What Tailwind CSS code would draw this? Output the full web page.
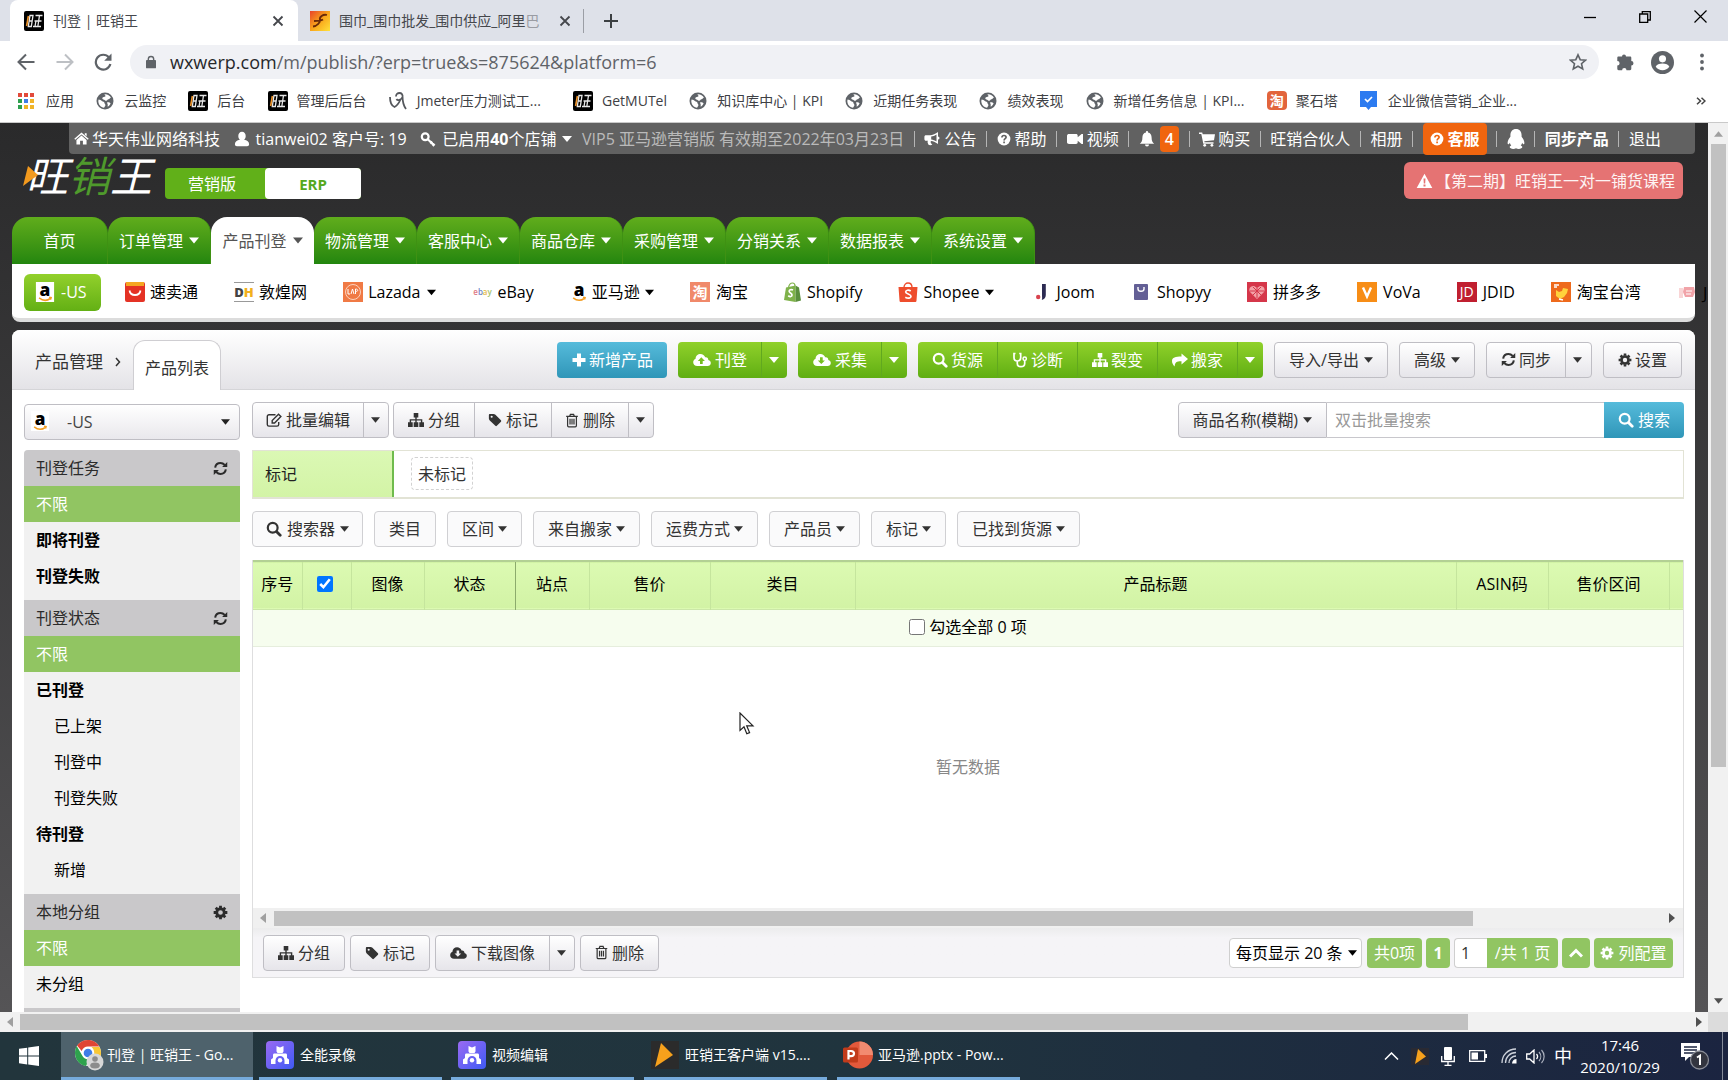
<!DOCTYPE html>
<html lang="zh-CN">
<head>
<meta charset="utf-8">
<title>刊登 | 旺销王</title>
<script src="https://cdn.jsdelivr.net/npm/@tailwindcss/browser@4"></script>
</head>
<body class="flex h-screen flex-col overflow-hidden bg-white font-['Open_Sans','Noto_Sans_CJK_SC',sans-serif] text-[16px] leading-6 text-[#222]">

<svg class="absolute h-0 w-0" aria-hidden="true">
  <defs>
    <linearGradient id="flame" x1="0" y1="0" x2="1" y2="1"><stop offset="0" stop-color="#e8432a"/><stop offset=".5" stop-color="#f9a51b"/><stop offset="1" stop-color="#ffe23a"/></linearGradient>
    <linearGradient id="violet" x1="0" y1="0" x2="1" y2="1"><stop offset="0" stop-color="#9a6af2"/><stop offset="1" stop-color="#3f5af5"/></linearGradient>
  </defs>
  <symbol id="caret" viewBox="0 0 10 6"><path fill="currentColor" d="M0 0h10L5 6z"/></symbol>
  <symbol id="close" viewBox="0 0 12 12"><path fill="none" stroke="currentColor" stroke-width="1.8" d="M1.5 1.5l9 9m0-9l-9 9"/></symbol>
  <symbol id="plus" viewBox="0 0 16 16"><path fill="currentColor" d="M6 1.500h4V6h4.500v4H10v4.500H6V10H1.500V6H6z"/></symbol>
  <symbol id="globe" viewBox="0 0 18 18"><circle cx="9" cy="9" r="8.500" fill="#5f6368"/><path fill="#fff" d="M2.600 7.500c1.500.2 2.500.6 3.300 1.500.9.900 2.600.5 2.600 2 0 1.200 1.300 1.300.8 2.700-.3.900-1 1.300-1.200 2C4.800 15.300 2.300 12.700 2.300 9zM8.500 2.200c3-.2 5.200 1.200 6.400 3.400-1 .6-1.300 1.600-2.400 1.700-1.300.1-1 1.300-2.200 1.400C9 8.800 8.800 7.600 7.300 7.400 6 7.200 6 6 7 5.300c.9-.6 2.500-.2 2.500-1.300 0-.8-1-.9-1-1.800z"/><path fill="#fff" d="M11 10.500c1.300-.6 3 .2 3.600.8-.4 1.300-1.500 2.700-2.800 3.500-.4-1.300.3-1.800-.2-2.600z"/></symbol>
  <symbol id="wang" viewBox="0 0 20 20"><rect width="20" height="20" rx="2" fill="#000"/><g fill="none" stroke="#e8e8e8" stroke-width="1.300"><path d="M6 4.500h3L7.300 15.500h-3zM5.200 10h3.300M11.500 4.500h7M10.500 10h7M9 15.500h8M15.500 4.500l-1.700 11M12 9.500l-1 6"/></g><path stroke="#f0952a" stroke-width="1.600" d="M4.400 5L2.600 15"/></symbol>
  <symbol id="home" viewBox="0 0 16 16"><path fill="currentColor" d="M8 1.600L15.700 8.300l-1 1.100L8 3.700 1.300 9.400l-1-1.100zM8 4.900l5.400 4.600V14.500H9.500V10.500h-3v4H2.600V9.500zM11.500 2.300h2v3.300l-2-1.700z"/></symbol>
  <symbol id="user" viewBox="0 0 16 16"><path fill="currentColor" d="M8 .8c2.200 0 3.700 1.700 3.700 4.200 0 1.700-.7 3-1.600 3.700 3 .4 5 1.900 5 4.600 0 1.200-.8 1.900-2 1.900H2.900c-1.200 0-2-.7-2-1.900 0-2.700 2-4.200 5-4.600C5 8 4.300 6.700 4.300 5 4.300 2.500 5.800.8 8 .8z"/></symbol>
  <symbol id="key" viewBox="0 0 16 16"><circle cx="5.200" cy="5.800" r="3.400" fill="none" stroke="currentColor" stroke-width="2.200"/><path fill="none" stroke="currentColor" stroke-width="2.200" d="M7.500 8l6.300 6M10.300 12.600l2-2M12.600 14.900l2-2"/></symbol>
  <symbol id="horn" viewBox="0 0 16 16"><path fill="currentColor" fill-rule="evenodd" d="M14 1v4.500a1.500 1.500 0 0 1 0 3V13c-2-1.700-4.500-2.900-7-3.100-.7.900 0 1.500-.2 2.200.5.600.9 1 1.500 1.400-1 1.200-3.300.9-4 .1C4.100 12 3 11.500 3.900 9.800H2C1 9.800.4 9.200.4 8.300V5.700C.4 4.800 1 4.200 2 4.200h4C8.500 4.200 11.700 2.800 14 1zm-1.500 2.600C10.800 4.800 9 5.400 7.200 5.600v2.900c1.900.2 3.700.900 5.300 2z"/></symbol>
  <symbol id="help" viewBox="0 0 16 16"><circle cx="8" cy="8" r="7.300" fill="currentColor"/><path fill="none" stroke="var(--hole,#616161)" stroke-width="1.900" d="M5.600 6.300c.1-1.700 1-2.300 2.400-2.300 1.500 0 2.400.8 2.400 2 0 1.700-2.300 1.600-2.300 3.700M8.100 10.900v2"/></symbol>
  <symbol id="video" viewBox="0 0 16 16"><path fill="currentColor" d="M2 3h7c1 0 1.700.7 1.700 1.700v1.600L14.600 3H16v10h-1.400l-3.900-3.300v1.600c0 1-.7 1.700-1.700 1.700H2c-1 0-2-.7-2-1.700V4.700C0 3.700 1 3 2 3z"/></symbol>
  <symbol id="bell" viewBox="0 0 16 16"><path fill="currentColor" d="M8 0c.6 0 1 .4 1 1v.6c2.500.4 3.600 2.400 3.600 4.900 0 3.500 1 4.800 2.600 6.200H.8C2.400 11.300 3.400 10 3.400 6.500 3.400 4 4.500 2 7 1.600V1c0-.6.400-1 1-1zM6 13.500h4a2 2 0 0 1-4 0z"/></symbol>
  <symbol id="cart" viewBox="0 0 16 16"><path fill="currentColor" d="M0 1.500h3.200l.5 1.700H16l-1 6L5.300 10.300l.2 1H14.500v1.400H4.300L2.300 3H0z"/><circle cx="5.700" cy="14.300" r="1.400" fill="currentColor"/><circle cx="12.900" cy="14.300" r="1.400" fill="currentColor"/></symbol>
  <symbol id="qq" viewBox="0 0 18 20"><path fill="currentColor" d="M9 0c3.600 0 5.600 2.600 5.600 6.200v1.600c1.600 2 2.800 4.200 2.800 6.100 0 1-.5 1.600-1 1.400-.4-.1-.9-.8-1.200-1.500-.2 1-.8 2-1.500 2.700.9.300 1.600.9 1.600 1.600 0 1.100-1.600 1.900-3.500 1.900-1.200 0-2.200-.3-2.800-.8-.6.500-1.600.8-2.800.8-1.900 0-3.500-.8-3.500-1.900 0-.7.700-1.300 1.600-1.600-.7-.7-1.300-1.700-1.500-2.700-.3.700-.8 1.400-1.200 1.500-.5.200-1-.4-1-1.400 0-1.900 1.200-4.100 2.800-6.100V6.200C3.400 2.600 5.400 0 9 0z"/></symbol>
  <symbol id="warn" viewBox="0 0 16 16"><path fill="currentColor" fill-rule="evenodd" d="M8 .8l7.800 14.200H.2zM7 5.500l.3 5h1.400l.3-5zM7 11.500v2h2v-2z"/></symbol>
  <symbol id="search" viewBox="0 0 16 16"><circle cx="6.700" cy="6.700" r="4.900" fill="none" stroke="currentColor" stroke-width="2.200"/><path stroke="currentColor" stroke-width="2.800" stroke-linecap="round" d="M10.700 10.700l3.500 3.500"/></symbol>
  <symbol id="cloudup" viewBox="0 0 18 16"><path fill="currentColor" fill-rule="evenodd" d="M7.500 2c2.200 0 4 1.400 4.700 3.300 1.800-.4 3.300.8 3.100 2.700 1.500.4 2.500 1.500 2.500 3 0 1.800-1.400 3-3.200 3H4.200C1.900 14 .2 12.500.2 10.300c0-1.600 1-2.900 2.400-3.500C2.600 4 4.800 2 7.500 2zM8.300 5.300L4.800 8.900H7V12h2.700V8.900h2.200z"/></symbol>
  <symbol id="clouddown" viewBox="0 0 18 16"><path fill="currentColor" fill-rule="evenodd" d="M7.500 2c2.200 0 4 1.400 4.700 3.300 1.800-.4 3.300.8 3.100 2.700 1.500.4 2.500 1.500 2.500 3 0 1.800-1.400 3-3.200 3H4.200C1.900 14 .2 12.500.2 10.300c0-1.600 1-2.900 2.400-3.500C2.600 4 4.800 2 7.500 2zM7 5.300v3.100H4.800l3.500 3.700 3.600-3.700H9.700V5.300z"/></symbol>
  <symbol id="steth" viewBox="0 0 16 16"><path fill="none" stroke="currentColor" stroke-width="1.700" d="M3.500 1.500H2v4c0 2 1.400 3.500 3.300 3.500s3.400-1.500 3.400-3.500v-4H7.200M5.300 9v2.500c0 2 1.500 3.200 3.600 3.200s3.800-1.200 3.800-3.200V8.500"/><circle cx="12.700" cy="6.800" r="1.700" fill="none" stroke="currentColor" stroke-width="1.500"/></symbol>
  <symbol id="tree" viewBox="0 0 16 16"><path fill="currentColor" d="M5.700 1h4.600v4.500H8.700v1.700h5.600v3H16V15h-4.700v-4.800h1.600V8.600H8.700v1.600h1.600V15H5.700v-4.800h1.600V8.600H3.100v1.600h1.600V15H0v-4.800h1.700v-3h5.600V5.500H5.700z"/></symbol>
  <symbol id="share" viewBox="0 0 16 16"><path fill="currentColor" d="M9.500 1.500L16 7l-6.500 5.500V9.300C5 9.200 2.800 10 2.700 14.600.9 12.500 0 10.800 0 8.900 0 5.500 3.500 4.600 9.500 4.600z"/></symbol>
  <symbol id="refresh" viewBox="0 0 16 16"><path fill="none" stroke="currentColor" stroke-width="2.200" d="M2.300 7C2.800 4 5 2.200 8 2.200c1.800 0 3.300.8 4.500 2M13.700 9c-.5 3-2.700 4.800-5.700 4.800-1.800 0-3.300-.8-4.500-2"/><path fill="currentColor" d="M15.200 1v5.500H9.700zM.8 15V9.500h5.500z"/></symbol>
  <symbol id="gear" viewBox="0 0 16 16"><circle cx="8" cy="8" r="4" fill="none" stroke="currentColor" stroke-width="3"/><path stroke="currentColor" stroke-width="3" d="M8 .7v2.500M8 12.800v2.500M.7 8h2.500M12.800 8h2.500M2.900 2.900l1.700 1.700M11.400 11.400l1.700 1.700M2.900 13.100l1.700-1.700M11.400 4.600l1.700-1.700"/></symbol>
  <symbol id="edit" viewBox="0 0 16 16"><path fill="none" stroke="currentColor" stroke-width="1.400" d="M9.500 2.700H3c-1 0-1.700.7-1.700 1.700v8c0 1 .7 1.700 1.700 1.700h8c1 0 1.700-.7 1.700-1.700V10"/><path fill="none" stroke="currentColor" stroke-width="1.400" d="M6.200 11V8.500l6.300-6.300 2.400 2.400L8.600 11z"/></symbol>
  <symbol id="tag" viewBox="0 0 16 16"><path fill="currentColor" fill-rule="evenodd" d="M1 2.200C1 1.500 1.500 1 2.200 1h4c.8 0 1.800.4 2.300 1l6.300 6.200c.5.500.5 1.200 0 1.700l-4.700 4.800c-.5.500-1.200.5-1.700 0L2 8.500C1.400 8 1 7 1 6.200zm3.200.8a1.200 1.200 0 1 0 0 2.400 1.200 1.200 0 0 0 0-2.400z"/></symbol>
  <symbol id="trash" viewBox="0 0 14 16"><path fill="none" stroke="currentColor" stroke-width="1.300" d="M.8 3.700h12.400M4.500 3.500l.8-2h3.400l.8 2M2.300 4v9.300c0 .8.500 1.400 1.200 1.400h7c.7 0 1.200-.6 1.200-1.400V4M4.900 6.200v6M7 6.200v6M9.100 6.200v6"/></symbol>
  <symbol id="amazon" viewBox="0 0 20 22"><rect width="20" height="22" fill="#fff"/><text x="10" y="15" text-anchor="middle" font-family="Open Sans" font-weight="800" font-size="19" fill="#000">a</text><path fill="none" stroke="#f39c1f" stroke-width="1.700" d="M3.500 17.500c4 3.200 9 3.200 12.500.5M14.500 16.800l2.200.4-.6 2.200"/></symbol>
  <symbol id="recorder" viewBox="0 0 28 28"><rect width="28" height="28" rx="4" fill="url(#violet)"/><path fill="#fff" d="M10.500 5l3.500 1.500L17.500 5v5.500l-1 1.500h-5l-1-1.500zM8.500 12.500h11c1 0 1.500.7 1.500 1.500v3l2 1.500V23h-4.500v-3.500a4.500 4.500 0 0 0-9 0V23H5v-4.500L7 17v-3c0-.8.500-1.500 1.500-1.500z"/><circle cx="14" cy="19.300" r="2.200" fill="#fff"/></symbol>
</svg>

<!-- tab strip -->
<header class="shrink-0">
  <div class="flex h-[41px] items-center bg-[#dee1e9] text-[14px] text-[#45474c]">
    <div class="ml-[10px] flex h-full w-[288px] shrink-0 items-center rounded-t-lg bg-white pr-[10px] pl-[14px]">
      <svg class="h-5 w-5"><use href="#wang"/></svg>
      <span class="ml-[9px] flex-1">刊登 | 旺销王</span>
      <button aria-label="关闭标签页" class="p-1"><svg class="h-3 w-3"><use href="#close"/></svg></button>
    </div>
    <div class="flex w-[286px] shrink-0 items-center border-r border-[#9b9ea5] pr-2 pl-3">
      <svg class="h-5 w-5" viewBox="0 0 20 20"><rect width="20" height="20" fill="url(#flame)"/><path fill="none" stroke="#6b2a08" stroke-width="1.800" d="M17 4c-4-1-8 2-7 5 .7 2-3 6-7 6.500M4 10c3 0 7-.3 9-1.500"/></svg>
      <span class="ml-[9px] flex-1 whitespace-nowrap">围巾_围巾批发_围巾供应_阿里<span class="text-[#9a9ca3]">巴</span></span>
      <button aria-label="关闭标签页" class="p-1"><svg class="h-3 w-3"><use href="#close"/></svg></button>
    </div>
    <button aria-label="新标签页" class="ml-5"><svg class="h-[14px] w-[14px]" viewBox="0 0 14 14"><path stroke="#3c4043" stroke-width="2" d="M7 0v14M0 7h14"/></svg></button>
    <div class="ml-auto flex items-center gap-[43px] pr-[21px] pb-2 text-black">
      <button aria-label="最小化"><svg class="h-3 w-3" viewBox="0 0 12 12"><path stroke="currentColor" stroke-width="1.300" d="M0 6.500h12"/></svg></button>
      <button aria-label="还原"><svg class="h-3 w-3" viewBox="0 0 12 12"><path fill="none" stroke="currentColor" stroke-width="1.300" d="M.7 3h8v8.300h-8zM3.300 3V.7h8v8.300H9"/></svg></button>
      <button aria-label="关闭"><svg class="h-[13px] w-[13px]" viewBox="0 0 13 13"><path stroke="currentColor" stroke-width="1.200" d="M.5.5l12 12m0-12l-12 12"/></svg></button>
    </div>
  </div>
  <!-- address bar -->
  <div class="flex h-[42px] items-center pr-6 pl-[17px] text-[#5f6368]">
    <button aria-label="后退"><svg class="h-[18px] w-[18px]" viewBox="0 0 18 18"><path fill="none" stroke="currentColor" stroke-width="2" d="M17.500 9H2M9 1.500L1.500 9 9 16.500"/></svg></button>
    <button aria-label="前进" class="ml-[21px] text-[#bdc0c4]"><svg class="h-[18px] w-[18px]" viewBox="0 0 18 18"><path fill="none" stroke="currentColor" stroke-width="2" d="M.5 9H16M9 1.500L16.500 9 9 16.500"/></svg></button>
    <button aria-label="刷新" class="ml-5"><svg class="h-[18px] w-[18px]" viewBox="0 0 18 18"><path fill="none" stroke="currentColor" stroke-width="2.200" d="M15 4.500A7.400 7.400 0 1 0 16.400 11"/><path fill="currentColor" d="M17.500.5v7.300h-7.300z"/></svg></button>
    <div class="ml-[18px] flex h-[34px] flex-1 items-center rounded-full bg-[#f0f1f5] pr-3 pl-4">
      <svg class="h-[14px] w-[10px]" viewBox="0 0 12 15"><rect y="5" width="12" height="10" rx="1" fill="currentColor"/><path fill="none" stroke="currentColor" stroke-width="1.700" d="M2.800 6V4a3.200 3.200 0 0 1 6.400 0v2"/></svg>
      <span class="ml-[14px] flex-1 text-[18px]"><span class="text-[#26282b]">wxwerp.com</span>/m/publish/?erp=true&amp;s=875624&amp;platform=6</span>
      <svg class="h-[18px] w-[18px]" viewBox="0 0 18 18"><path fill="none" stroke="currentColor" stroke-width="1.600" d="M9 1.800l2.200 4.900 5.300.5-4 3.500 1.200 5.200L9 13.200l-4.700 2.700 1.200-5.200-4-3.500 5.300-.5z"/></svg>
    </div>
    <svg class="ml-[17px] h-[18px] w-[18px]" viewBox="0 0 18 18"><path fill="currentColor" d="M6 3.500a2 2 0 0 1 4 0h4c.8 0 1.300.5 1.300 1.300V8a2.200 2.200 0 0 1 0 4.400v3.400c0 .8-.5 1.400-1.300 1.400h-3.500a2.200 2.200 0 0 0-4.400 0H2.600c-.8 0-1.300-.6-1.300-1.400v-3.200a2.300 2.300 0 0 0 0-4.600V4.800c0-.8.5-1.300 1.300-1.300z"/></svg>
    <svg class="ml-[17px] h-[23px] w-[23px]" viewBox="0 0 22 22"><circle cx="11" cy="11" r="11" fill="currentColor"/><circle cx="11" cy="7.500" r="3.400" fill="#fff"/><path fill="#fff" d="M4.500 15c.8-2.200 3.500-3 6.500-3s5.700.8 6.500 3c-1.400 2-3.900 3.300-6.500 3.300S5.900 17 4.500 15z"/></svg>
    <svg class="ml-[26px] h-[18px] w-1" viewBox="0 0 4 18"><circle cx="2" cy="2.500" r="1.900" fill="currentColor"/><circle cx="2" cy="9" r="1.900" fill="currentColor"/><circle cx="2" cy="15.500" r="1.900" fill="currentColor"/></svg>
  </div>
  <!-- bookmarks -->
  <nav class="flex h-[40px] items-center border-b border-[#c9c9c9] pb-1 pl-[18px] pr-[22px] text-[14px] text-[#3e4044]">
    <ul class="mr-[179px] flex flex-1 items-center justify-between whitespace-nowrap">
      <li><a href="#" class="flex items-center gap-3"><svg class="h-4 w-4" viewBox="0 0 16 16"><g fill="#e24a3b"><path d="M0 0h4v4H0zM6 0h4v4H6zM12 0h4v4h-4z"/></g><path fill="#2fa04e" d="M0 6h4v4H0zM0 12h4v4H0z"/><path fill="#3f7de8" d="M6 6h4v4H6z"/><path fill="#f0b429" d="M12 6h4v4h-4zM6 12h4v4H6zM12 12h4v4h-4z"/></svg>应用</a></li>
      <li><a href="#" class="flex items-center gap-[10px]"><svg class="h-[18px] w-[18px]"><use href="#globe"/></svg>云监控</a></li>
      <li><a href="#" class="flex items-center gap-[9px]"><svg class="h-5 w-5"><use href="#wang"/></svg>后台</a></li>
      <li><a href="#" class="flex items-center gap-[9px]"><svg class="h-5 w-5"><use href="#wang"/></svg>管理后后台</a></li>
      <li class="pr-[10px]"><a href="#" class="flex items-center gap-[10px]"><svg class="h-[18px] w-[18px]" viewBox="0 0 18 18"><path fill="none" stroke="#55585d" stroke-width="1.800" d="M1 5c0 6 2 9 4.500 10 2-1 4-3 6-7.500M7 4.500C7 2 8.500 1 10.500 1S14 2.500 13.500 5c-1 3-5 4-6 2M13.500 4c0 5 .5 9 3.500 13"/></svg>Jmeter压力测试工...</a></li>
      <li><a href="#" class="flex items-center gap-[9px]"><svg class="h-5 w-5"><use href="#wang"/></svg>GetMUTel</a></li>
      <li><a href="#" class="flex items-center gap-[10px]"><svg class="h-[18px] w-[18px]"><use href="#globe"/></svg>知识库中心 | KPI</a></li>
      <li><a href="#" class="flex items-center gap-[10px]"><svg class="h-[18px] w-[18px]"><use href="#globe"/></svg>近期任务表现</a></li>
      <li><a href="#" class="flex items-center gap-[10px]"><svg class="h-[18px] w-[18px]"><use href="#globe"/></svg>绩效表现</a></li>
      <li><a href="#" class="flex items-center gap-[10px]"><svg class="h-[18px] w-[18px]"><use href="#globe"/></svg>新增任务信息 | KPI...</a></li>
      <li><a href="#" class="flex items-center gap-[9px]"><span class="flex h-[19px] w-5 items-center justify-center rounded-sm bg-[#e2643c] text-[14px] font-bold text-white">淘</span>聚石塔</a></li>
      <li><a href="#" class="flex items-center gap-[11px]"><svg class="h-[19px] w-[17px]" viewBox="0 0 17 19"><path fill="#2c7bf0" d="M0 0h17v16h-6l-2.500 3L6 16H0z"/><path fill="none" stroke="#fff" stroke-width="1.700" d="M5 8l2.500 2.500L12 6"/></svg>企业微信营销_企业...</a></li>
    </ul>
    <button aria-label="更多书签"><svg class="h-2 w-[10px]" viewBox="0 0 10 8"><path fill="none" stroke="#444" stroke-width="1.500" d="M1 .7L4.500 4 1 7.300M5.500.7L9 4 5.500 7.300"/></svg></button>
  </nav>
</header>

<!-- page viewport -->
<div class="flex min-h-0 flex-1">
  <main class="flex min-w-0 flex-1 flex-col overflow-hidden bg-linear-to-b from-[#2a2a2b] to-[#555456] pl-3">
    <!-- account bar -->
    <div class="mr-[13px] ml-[57px] flex h-[31px] shrink-0 items-center justify-between rounded-b bg-[#616161] pr-[34px] pl-[5px] whitespace-nowrap text-white">
      <a href="#" class="mr-1 flex items-center gap-[3px]"><svg class="h-[15px] w-[15px]"><use href="#home"/></svg>华天伟业网络科技</a>
      <a href="#" class="mr-1 flex items-center gap-[6px]"><svg class="h-4 w-4"><use href="#user"/></svg>tianwei02 客户号: 19</a>
      <a href="#" class="flex items-center gap-[6px]"><svg class="h-4 w-4"><use href="#key"/></svg><span>已启用<b>40</b>个店铺</span><svg class="h-[6px] w-[10px]"><use href="#caret"/></svg></a>
      <span class="text-[#bababa]">VIP5 亚马逊营销版 有效期至2022年03月23日</span>
      <i class="h-4 w-px bg-[#b5b5b5]"></i>
      <a href="#" class="flex items-center gap-1"><svg class="h-4 w-4"><use href="#horn"/></svg>公告</a>
      <i class="h-4 w-px bg-[#b5b5b5]"></i>
      <a href="#" class="flex items-center gap-1"><svg class="h-[14px] w-[14px]"><use href="#help"/></svg>帮助</a>
      <i class="h-4 w-px bg-[#b5b5b5]"></i>
      <a href="#" class="flex items-center gap-1"><svg class="h-4 w-4"><use href="#video"/></svg>视频</a>
      <i class="h-4 w-px bg-[#b5b5b5]"></i>
      <a href="#" class="flex items-center gap-[5px]"><svg class="h-4 w-4"><use href="#bell"/></svg><span class="rounded bg-[#f0650f] px-[5px] leading-[26px] font-semibold">4</span></a>
      <i class="h-4 w-px bg-[#b5b5b5]"></i>
      <a href="#" class="flex items-center gap-[3px]"><svg class="h-4 w-4"><use href="#cart"/></svg>购买</a>
      <i class="h-4 w-px bg-[#b5b5b5]"></i>
      <a href="#">旺销合伙人</a>
      <i class="h-4 w-px bg-[#b5b5b5]"></i>
      <a href="#">相册</a>
      <i class="h-4 w-px bg-[#b5b5b5]"></i>
      <a href="#" class="flex h-8 items-center gap-1 rounded bg-[#f0650f] px-[7px] font-bold [--hole:#f0650f]"><svg class="h-[14px] w-[14px]"><use href="#help"/></svg>客服</a>
      <i class="h-4 w-px bg-[#b5b5b5]"></i>
      <a href="#" aria-label="QQ"><svg class="h-5 w-[18px]"><use href="#qq"/></svg></a>
      <i class="h-4 w-px bg-[#b5b5b5]"></i>
      <a href="#" class="font-bold">同步产品</a>
      <i class="h-4 w-px bg-[#b5b5b5]"></i>
      <a href="#">退出</a>
    </div>

    <!-- logo row -->
    <div class="flex h-[63px] shrink-0 items-start pr-[25px]">
      <a href="#" class="relative ml-[14px] flex h-[44px] w-[139px] items-center text-[42px] whitespace-nowrap text-white italic">
        旺<span class="text-[#4f9a2c]">销</span>王
        <svg class="absolute top-3 -left-[3px] h-5 w-[15px]" viewBox="0 0 15 20"><path fill="#f39a1e" d="M5 0l10 9L0 20z"/></svg>
      </a>
      <div class="mt-[14px] flex h-[31px] rounded bg-[#61b019]">
        <button class="w-[100px] pr-[6px] text-white">营销版</button>
        <button class="w-24 rounded bg-white text-[15px] font-bold text-[#55a820]">ERP</button>
      </div>
      <a href="#" class="mt-2 ml-auto flex h-[37px] items-center gap-[2px] rounded-md bg-[#e57373] pr-2 pl-3 text-[#fdf3f3]"><svg class="h-4 w-[17px] text-white"><use href="#warn"/></svg>【第二期】旺销王一对一铺货课程</a>
    </div>

    <!-- main navigation -->
    <nav class="flex h-[47px] shrink-0 items-stretch text-white">
      <a href="#" class="flex w-24 items-center justify-center rounded-t-2xl border-r border-[#3f9113] bg-linear-to-b from-[#60ad1c] to-[#22860f]">首页</a>
      <a href="#" class="flex w-[103px] items-center justify-center gap-[6px] rounded-t-2xl border-r border-[#3f9113] bg-linear-to-b from-[#60ad1c] to-[#22860f]">订单管理<svg class="h-[7px] w-[10px]"><use href="#caret"/></svg></a>
      <a href="#" class="flex w-[103px] items-center justify-center gap-[6px] rounded-t-2xl bg-white text-[#555]">产品刊登<svg class="h-[7px] w-[10px]"><use href="#caret"/></svg></a>
      <a href="#" class="flex w-[103px] items-center justify-center gap-[6px] rounded-t-2xl border-r border-[#3f9113] bg-linear-to-b from-[#60ad1c] to-[#22860f]">物流管理<svg class="h-[7px] w-[10px]"><use href="#caret"/></svg></a>
      <a href="#" class="flex w-[103px] items-center justify-center gap-[6px] rounded-t-2xl border-r border-[#3f9113] bg-linear-to-b from-[#60ad1c] to-[#22860f]">客服中心<svg class="h-[7px] w-[10px]"><use href="#caret"/></svg></a>
      <a href="#" class="flex w-[103px] items-center justify-center gap-[6px] rounded-t-2xl border-r border-[#3f9113] bg-linear-to-b from-[#60ad1c] to-[#22860f]">商品仓库<svg class="h-[7px] w-[10px]"><use href="#caret"/></svg></a>
      <a href="#" class="flex w-[103px] items-center justify-center gap-[6px] rounded-t-2xl border-r border-[#3f9113] bg-linear-to-b from-[#60ad1c] to-[#22860f]">采购管理<svg class="h-[7px] w-[10px]"><use href="#caret"/></svg></a>
      <a href="#" class="flex w-[103px] items-center justify-center gap-[6px] rounded-t-2xl border-r border-[#3f9113] bg-linear-to-b from-[#60ad1c] to-[#22860f]">分销关系<svg class="h-[7px] w-[10px]"><use href="#caret"/></svg></a>
      <a href="#" class="flex w-[103px] items-center justify-center gap-[6px] rounded-t-2xl border-r border-[#3f9113] bg-linear-to-b from-[#60ad1c] to-[#22860f]">数据报表<svg class="h-[7px] w-[10px]"><use href="#caret"/></svg></a>
      <a href="#" class="flex w-[103px] items-center justify-center gap-[6px] rounded-t-2xl border-r border-[#3f9113] bg-linear-to-b from-[#60ad1c] to-[#22860f]">系统设置<svg class="h-[7px] w-[10px]"><use href="#caret"/></svg></a>
    </nav>

    <!-- platforms -->
    <div class="relative mr-[13px] flex h-[58px] shrink-0 items-center rounded-b-lg border-b-4 border-[#dcdcdc] bg-white pt-[2px] pl-3 text-black">
      <a href="#" class="flex h-[37px] w-[77px] shrink-0 items-center rounded-md bg-linear-to-b from-[#92d02b] to-[#63b014] pl-[11px] text-white"><svg class="mr-[6px] h-5 w-5"><use href="#amazon"/></svg>-US</a>
      <ul class="mr-[54px] ml-6 flex flex-1 items-center justify-between whitespace-nowrap">
        <li><a href="#" class="flex items-center gap-[5px]"><svg class="h-5 w-5" viewBox="0 0 20 20"><rect width="20" height="20" rx="2" fill="#e43225"/><path fill="#f5a623" d="M1 0h18v4H1z"/><path fill="#e43225" d="M0 4h20v3H0z"/><path fill="none" stroke="#fff" stroke-width="1.800" d="M4.500 8.500c1 6 10 6 11 0"/></svg>速卖通</a></li>
        <li><a href="#" class="flex items-center gap-[5px]"><span class="flex h-5 w-5 items-center justify-center border-y border-[#999] text-[13px] font-extrabold text-[#444]">D<span class="text-[#f2b01e]">H</span></span>敦煌网</a></li>
        <li><a href="#" class="flex items-center gap-[5px]"><svg class="h-5 w-5" viewBox="0 0 20 20"><rect width="20" height="20" fill="#f07a45"/><circle cx="10" cy="10" r="7.500" fill="none" stroke="#fcd3be"/><path fill="none" stroke="#fff" d="M5 7v5h2M8 12l1.500-5 1.500 5M12.500 12V7c3 0 3 2.500 0 2.500"/></svg>Lazada<svg class="ml-[2px] h-[7px] w-[9px]"><use href="#caret"/></svg></a></li>
        <li><a href="#" class="flex items-center gap-[5px]"><span class="flex w-5 justify-center text-[8px] font-semibold"><span class="text-[#e07a85]">e</span><span class="text-[#6d84c8]">b</span><span class="text-[#e5b94b]">a</span><span class="text-[#a3c269]">y</span></span>eBay</a></li>
        <li><a href="#" class="flex items-center gap-[4px]"><svg class="h-5 w-[18px]"><use href="#amazon"/></svg>亚马逊<svg class="ml-[1px] h-[7px] w-[9px]"><use href="#caret"/></svg></a></li>
        <li><a href="#" class="flex items-center gap-[6px]"><span class="flex h-5 w-5 items-center justify-center bg-[#f0896a] text-[15px] font-bold text-white">淘</span>淘宝</a></li>
        <li><a href="#" class="flex items-center gap-[6px]"><svg class="h-5 w-[17px]" viewBox="0 0 17 20"><path fill="#7fb24a" d="M2 5.500L11.500 3.500V20L0 18z"/><path fill="#5a8f3c" d="M11.500 3.500L15 5.500l2 13-5.500 1.500z"/><path fill="none" stroke="#7fb24a" stroke-width="1.200" d="M4.500 5.500C5 3 6.500 1 8.500 1S11 3 11 4"/><path fill="none" stroke="#fff" stroke-width="1.700" d="M9 8c-2-1-4 0-3.800 1.500.2 1.500 2.800 1.500 2.800 3.500 0 1.700-2 2-3.800.8"/></svg>Shopify</a></li>
        <li><a href="#" class="flex items-center gap-[5px]"><svg class="h-5 w-5" viewBox="0 0 20 20"><path fill="#ee4d2d" d="M.5 5h19l-1 13.500c0 1-.7 1.500-1.500 1.500H3c-.8 0-1.500-.5-1.500-1.500z"/><path fill="none" stroke="#ee4d2d" stroke-width="1.400" d="M6 5.500C6 2.500 8 1 10 1s4 1.500 4 4.500"/><path fill="none" stroke="#fff" stroke-width="1.700" d="M12.700 9c-2.200-1.500-5-.8-5 1 0 2.200 5.300 1.800 5.300 4.300 0 2-3 2.600-5.700.9"/></svg>Shopee<svg class="ml-[1px] h-[7px] w-[9px]"><use href="#caret"/></svg></a></li>
        <li><a href="#" class="flex items-center gap-[6px]"><svg class="h-4 w-5" viewBox="-5 0 20 16"><path fill="#2c2a52" d="M6 0h3.800v11c0 2.500-1.500 4.500-4 5 .6-1.500.2-3 .2-5z"/><circle cx="2.200" cy="13" r="2.200" fill="#d9434e"/></svg>Joom</a></li>
        <li><a href="#" class="flex items-center gap-[6px]"><svg class="h-4 w-5" viewBox="-3 0 20 16"><rect width="14" height="16" rx="1" fill="#635f95"/><path fill="none" stroke="#fff" stroke-width="1.400" d="M4 3v2c0 3 6 3 6 0V3"/></svg>Shopyy</a></li>
        <li><a href="#" class="flex items-center gap-[6px]"><svg class="h-5 w-5" viewBox="0 0 20 20"><rect width="20" height="20" fill="#d5374a"/><path fill="#f3a3a8" d="M10 17L3 10C1 6.500 4 3.500 7 4l3 2 3-2c3-.5 6 2.500 4 6z"/><path stroke="#d5374a" fill="none" d="M6 5l8 8M14 5l-8 8M3 9h14M10 6v10"/></svg>拼多多</a></li>
        <li><a href="#" class="flex items-center gap-[6px]"><svg class="h-5 w-5" viewBox="0 0 20 20"><rect width="20" height="20" fill="#f78d16"/><path fill="none" stroke="#fff" stroke-width="2.400" d="M6 5.500l4 9 4-9"/></svg>VoVa</a></li>
        <li><a href="#" class="flex items-center gap-[6px]"><span class="flex h-5 w-5 items-center justify-center bg-[#c01f30] text-[14px] text-white">JD</span>JDID</a></li>
        <li><a href="#" class="flex items-center gap-[6px]"><svg class="h-5 w-5" viewBox="0 0 20 20"><rect width="20" height="20" fill="#ee6a1c"/><path fill="#ffd23c" d="M5 8l3 2 3-1 1-3 5 1-1 4-3 4-4 2-4-3z"/><path fill="none" stroke="#fff" stroke-width="1.400" d="M3 3h5M3 5h3M8 17l4 1"/></svg>淘宝台湾</a></li>
      </ul>
      <a href="#" class="absolute top-[17px] -right-3 flex w-7 items-center"><svg class="h-4 w-4 shrink-0" viewBox="0 0 16 16"><path fill="#f9d5d6" d="M0 3h4v10H0z"/><path fill="#f1a3a8" d="M5 2h10l1 5-2 5H6L4 7z"/><path stroke="#fff" d="M7 6h6M7 9h5"/></svg><span class="ml-2">J</span></a>
    </div>

    <!-- workspace -->
    <section class="mt-2 mr-[13px] flex min-h-0 flex-1 flex-col rounded-t-lg bg-white">
      <div class="flex h-[60px] shrink-0 items-center rounded-t-lg border-b border-[#d5d5d8] bg-linear-to-b from-white to-[#e4e3e7] pr-[13px] pb-1 pl-[23px] whitespace-nowrap text-[#333]">
        <a href="#" class="mt-2 text-[17px]">产品管理</a>
        <svg class="mt-2 ml-3 h-[10px] w-[6px]" viewBox="0 0 6 10"><path fill="none" stroke="#333" stroke-width="1.500" d="M1 1l3.500 4L1 9"/></svg>
        <a href="#" class="-mb-[15px] ml-3 flex h-[50px] w-[88px] items-center justify-center rounded-t-xl border border-b-0 border-[#cfced2] bg-white pt-1">产品列表</a>
        <div class="ml-auto flex gap-[11px] pt-1">
          <button class="flex h-9 items-center gap-[2px] rounded bg-linear-to-b from-[#55bbdb] to-[#2f96b8] px-[14px] text-white"><svg class="h-4 w-4"><use href="#plus"/></svg>新增产品</button>
          <div class="flex h-9 rounded bg-linear-to-b from-[#90d12a] to-[#5fae12] text-white">
            <button class="flex items-center gap-1 border-r border-[#61a81f] pr-[14px] pl-[15px]"><svg class="h-4 w-[18px]"><use href="#cloudup"/></svg>刊登</button>
            <button aria-label="刊登选项" class="w-[25px] pl-[7px]"><svg class="h-[6px] w-[10px]"><use href="#caret"/></svg></button>
          </div>
          <div class="flex h-9 rounded bg-linear-to-b from-[#90d12a] to-[#5fae12] text-white">
            <button class="flex items-center gap-1 border-r border-[#61a81f] pr-[14px] pl-[15px]"><svg class="h-4 w-[18px]"><use href="#clouddown"/></svg>采集</button>
            <button aria-label="采集选项" class="w-[25px] pl-[7px]"><svg class="h-[6px] w-[10px]"><use href="#caret"/></svg></button>
          </div>
          <div class="flex h-9 rounded bg-linear-to-b from-[#90d12a] to-[#5fae12] text-white">
            <button class="flex items-center gap-[3px] border-r border-[#61a81f] px-[14px]"><svg class="h-4 w-4"><use href="#search"/></svg>货源</button>
            <button class="flex items-center gap-[3px] border-r border-[#61a81f] px-[14px]"><svg class="h-4 w-4"><use href="#steth"/></svg>诊断</button>
            <button class="flex items-center gap-[3px] border-r border-[#61a81f] px-[14px]"><svg class="h-4 w-4"><use href="#tree"/></svg>裂变</button>
            <button class="flex items-center gap-[3px] border-r border-[#61a81f] px-[14px]"><svg class="h-4 w-4"><use href="#share"/></svg>搬家</button>
            <button aria-label="搬家选项" class="w-[25px] pl-[7px]"><svg class="h-[6px] w-[10px]"><use href="#caret"/></svg></button>
          </div>
          <button class="flex h-9 items-center gap-[5px] rounded border border-[#bfbec4] bg-linear-to-b from-white to-[#e6e5ea] px-[14px]">导入/导出<svg class="h-[6px] w-[9px]"><use href="#caret"/></svg></button>
          <button class="flex h-9 items-center gap-[5px] rounded border border-[#bfbec4] bg-linear-to-b from-white to-[#e6e5ea] px-[14px]">高级<svg class="h-[6px] w-[9px]"><use href="#caret"/></svg></button>
          <div class="flex h-9 rounded border border-[#bfbec4] bg-linear-to-b from-white to-[#e6e5ea]">
            <button class="flex items-center gap-[3px] border-r border-[#bfbec4] px-[14px]"><svg class="h-[15px] w-[15px]"><use href="#refresh"/></svg>同步</button>
            <button aria-label="同步选项" class="w-[25px] pl-[7px]"><svg class="h-[6px] w-[9px]"><use href="#caret"/></svg></button>
          </div>
          <button class="flex h-9 items-center gap-[3px] rounded border border-[#bfbec4] bg-linear-to-b from-white to-[#e6e5ea] px-[14px]"><svg class="h-[14px] w-[14px]"><use href="#gear"/></svg>设置</button>
        </div>
      </div>

      <div class="flex min-h-0 flex-1 pr-[11px] pl-3">
        <!-- sidebar -->
        <aside class="w-[216px] shrink-0 overflow-hidden pt-[14px]">
          <div class="relative">
            <select aria-label="店铺" class="h-9 w-full appearance-none rounded border border-[#bfbec4] bg-linear-to-b from-white to-[#e9e8ec] pl-[42px] text-[#444]"><option>-US</option></select>
            <svg class="pointer-events-none absolute top-[7px] left-[7px] h-5 w-[18px]"><use href="#amazon"/></svg>
            <svg class="pointer-events-none absolute top-[15px] right-[10px] h-[6px] w-[9px]"><use href="#caret"/></svg>
          </div>
          <div class="mt-[10px] rounded-t bg-[#f1f1f1] text-black">
            <h3 class="flex h-9 items-center justify-between rounded-t bg-[#c9c8ca] pr-3 pl-3 text-[#2b2b2b]">刊登任务<button aria-label="刷新" class="flex"><svg class="h-[15px] w-[15px]"><use href="#refresh"/></svg></button></h3>
            <ul class="pb-[6px] leading-9">
              <li><a href="#" class="block bg-[#91c562] pl-3 text-white">不限</a></li>
              <li><a href="#" class="block pl-3 font-bold">即将刊登</a></li>
              <li><a href="#" class="block pl-3 font-bold">刊登失败</a></li>
            </ul>
            <h3 class="flex h-9 items-center justify-between bg-[#c9c8ca] pr-3 pl-3 text-[#2b2b2b]">刊登状态<button aria-label="刷新" class="flex"><svg class="h-[15px] w-[15px]"><use href="#refresh"/></svg></button></h3>
            <ul class="pb-[6px] leading-9">
              <li><a href="#" class="block bg-[#91c562] pl-3 text-white">不限</a></li>
              <li><a href="#" class="block pl-3 font-bold">已刊登</a></li>
              <li><a href="#" class="block pl-[30px]">已上架</a></li>
              <li><a href="#" class="block pl-[30px]">刊登中</a></li>
              <li><a href="#" class="block pl-[30px]">刊登失败</a></li>
              <li><a href="#" class="block pl-3 font-bold">待刊登</a></li>
              <li><a href="#" class="block pl-[30px]">新增</a></li>
            </ul>
            <h3 class="flex h-9 items-center justify-between bg-[#c9c8ca] pr-3 pl-3 text-[#2b2b2b]">本地分组<button aria-label="设置分组" class="flex"><svg class="h-[15px] w-[15px]"><use href="#gear"/></svg></button></h3>
            <ul class="pb-[6px] leading-9">
              <li><a href="#" class="block bg-[#91c562] pl-3 text-white">不限</a></li>
              <li><a href="#" class="block pl-3">未分组</a></li>
            </ul>
            <div class="h-9 bg-[#c9c8ca]"></div>
          </div>
        </aside>

        <div class="ml-3 flex min-w-0 flex-1 flex-col pt-3 text-[#333]">
          <!-- toolbar -->
          <div class="flex h-9 shrink-0 whitespace-nowrap">
            <div class="flex rounded border border-[#bfbec4] bg-linear-to-b from-white to-[#e6e5ea]">
              <button class="flex items-center gap-1 border-r border-[#bfbec4] px-[13px]"><svg class="h-4 w-4"><use href="#edit"/></svg>批量编辑</button>
              <button aria-label="批量编辑选项" class="w-6 pl-[7px]"><svg class="h-[6px] w-[9px]"><use href="#caret"/></svg></button>
            </div>
            <div class="ml-1 flex rounded border border-[#bfbec4] bg-linear-to-b from-white to-[#e6e5ea]">
              <button class="flex items-center gap-1 border-r border-[#bfbec4] px-[14px]"><svg class="h-4 w-4"><use href="#tree"/></svg>分组</button>
              <button class="flex items-center gap-1 border-r border-[#bfbec4] px-[13px]"><svg class="h-[14px] w-[14px]"><use href="#tag"/></svg>标记</button>
              <button class="flex items-center gap-1 border-r border-[#bfbec4] px-[13px]"><svg class="h-[15px] w-[14px]"><use href="#trash"/></svg>删除</button>
              <button aria-label="删除选项" class="w-6 pl-[7px]"><svg class="h-[6px] w-[9px]"><use href="#caret"/></svg></button>
            </div>
            <form class="ml-auto flex">
              <button type="button" class="flex items-center gap-[5px] rounded-l border border-[#bfbec4] bg-linear-to-b from-white to-[#e6e5ea] px-[14px]">商品名称(模糊)<svg class="h-[6px] w-[9px]"><use href="#caret"/></svg></button>
              <input aria-label="搜索内容" placeholder="双击批量搜索" class="w-[277px] border-y border-[#c8c7cc] px-2 placeholder-[#999]">
              <button type="button" class="flex w-20 items-center justify-center gap-1 rounded-r bg-linear-to-b from-[#55bbdb] to-[#2f96b8] text-white"><svg class="h-4 w-4"><use href="#search"/></svg>搜索</button>
            </form>
          </div>

          <!-- tags -->
          <div class="mt-3 flex h-[49px] shrink-0 border border-b-2 border-[#e2e3d5]">
            <div class="flex w-[141px] items-center border-r-2 border-[#6fbb4d] bg-linear-to-b from-[#dbf8b4] to-[#d3f4a6] pl-3 text-[#222]">标记</div>
            <button class="mt-[6px] ml-[17px] h-[33px] rounded border border-dashed border-[#d2d2d2] px-[6px]">未标记</button>
          </div>

          <!-- filters -->
          <div class="mt-3 flex h-9 shrink-0 gap-[11px] whitespace-nowrap">
            <button class="flex items-center gap-[5px] rounded border border-[#d0d0d3] bg-[#fafafb] px-[13px]"><svg class="h-4 w-4"><use href="#search"/></svg>搜索器<svg class="h-[6px] w-[9px]"><use href="#caret"/></svg></button>
            <button class="rounded border border-[#d0d0d3] bg-[#fafafb] px-[14px]">类目</button>
            <button class="flex items-center gap-1 rounded border border-[#d0d0d3] bg-[#fafafb] px-[14px]">区间<svg class="h-[6px] w-[9px]"><use href="#caret"/></svg></button>
            <button class="flex items-center gap-1 rounded border border-[#d0d0d3] bg-[#fafafb] px-[14px]">来自搬家<svg class="h-[6px] w-[9px]"><use href="#caret"/></svg></button>
            <button class="flex items-center gap-1 rounded border border-[#d0d0d3] bg-[#fafafb] px-[14px]">运费方式<svg class="h-[6px] w-[9px]"><use href="#caret"/></svg></button>
            <button class="flex items-center gap-1 rounded border border-[#d0d0d3] bg-[#fafafb] px-[14px]">产品员<svg class="h-[6px] w-[9px]"><use href="#caret"/></svg></button>
            <button class="flex items-center gap-1 rounded border border-[#d0d0d3] bg-[#fafafb] px-[14px]">标记<svg class="h-[6px] w-[9px]"><use href="#caret"/></svg></button>
            <button class="flex items-center gap-1 rounded border border-[#d0d0d3] bg-[#fafafb] px-[14px]">已找到货源<svg class="h-[6px] w-[9px]"><use href="#caret"/></svg></button>
          </div>

          <!-- product table -->
          <div class="mt-[13px] shrink-0 border-x border-b border-[#dededf]">
            <table class="w-full table-fixed border-collapse">
              <colgroup><col class="w-[49px]"><col class="w-[49px]"><col class="w-[73px]"><col class="w-[91px]"><col class="w-[74px]"><col class="w-[121px]"><col class="w-[145px]"><col><col class="w-[92px]"><col class="w-[121px]"><col class="w-[14px]"></colgroup>
              <thead>
                <tr class="h-12 border-t-2 border-b border-t-[#b3d094] border-b-[#cbe7a8] bg-linear-to-b from-[#dcfab2] to-[#d2f3a5] text-black">
                  <th class="border-r border-[#c5e59d] pb-[2px] font-normal whitespace-nowrap">序号</th>
                  <th class="border-r border-[#c5e59d] pr-1 pb-[2px] font-normal"><input type="checkbox" checked aria-label="全选" class="mx-auto block h-4 w-4"></th>
                  <th class="border-r border-[#c5e59d] pb-[2px] font-normal">图像</th>
                  <th class="border-r border-[#8cab6c] pb-[2px] font-normal">状态</th>
                  <th class="border-r border-[#c5e59d] pb-[2px] font-normal">站点</th>
                  <th class="border-r border-[#c5e59d] pb-[2px] font-normal">售价</th>
                  <th class="border-r border-[#c5e59d] pb-[2px] font-normal">类目</th>
                  <th class="border-r border-[#c5e59d] pb-[2px] font-normal">产品标题</th>
                  <th class="border-r border-[#c5e59d] pb-[2px] font-normal">ASIN码</th>
                  <th class="border-r border-[#c5e59d] pb-[2px] font-normal">售价区间</th>
                  <th></th>
                </tr>
              </thead>
              <tbody>
                <tr class="h-[37px] border-b border-[#e6eedd] bg-[#f6fdee] text-black"><td colspan="11" class="pb-[2px]"><label class="flex items-center justify-center gap-1"><input type="checkbox" class="h-4 w-4">勾选全部 0 项</label></td></tr>
                <tr class="h-[262px]"><td colspan="11" class="pb-5 text-center text-[#888]">暂无数据</td></tr>
              </tbody>
            </table>
            <div class="flex h-5 items-center justify-between bg-[#f0f0f0] pr-2 pl-[7px]">
              <svg class="h-[10px] w-[6px]" viewBox="0 0 6 10"><path fill="#a0a0a0" d="M6 0v10L0 5z"/></svg>
              <div class="mr-auto ml-2 h-[15px] w-[84.7%] bg-[#c1c1c1]"></div>
              <svg class="h-[10px] w-[6px]" viewBox="0 0 6 10"><path fill="#505050" d="M0 0v10l6-5z"/></svg>
            </div>
            <div class="flex h-[49px] items-center bg-linear-to-b from-[#ececed] via-[#f5f4f7] via-20% to-[#f5f4f7] pr-[10px] pl-[10px] whitespace-nowrap">
              <button class="flex h-9 items-center gap-1 rounded border border-[#bfbec4] bg-linear-to-b from-white to-[#e6e5ea] px-[14px]"><svg class="h-4 w-4"><use href="#tree"/></svg>分组</button>
              <button class="ml-[5px] flex h-9 items-center gap-1 rounded border border-[#bfbec4] bg-linear-to-b from-white to-[#e6e5ea] px-[14px]"><svg class="h-[14px] w-[14px]"><use href="#tag"/></svg>标记</button>
              <div class="ml-[5px] flex h-9 rounded border border-[#bfbec4] bg-linear-to-b from-white to-[#e6e5ea]">
                <button class="flex items-center gap-1 border-r border-[#bfbec4] px-[14px]"><svg class="h-4 w-[17px]"><use href="#clouddown"/></svg>下载图像</button>
                <button aria-label="下载选项" class="w-6 pl-[7px]"><svg class="h-[6px] w-[9px]"><use href="#caret"/></svg></button>
              </div>
              <button class="ml-[5px] flex h-9 items-center gap-1 rounded border border-[#bfbec4] bg-linear-to-b from-white to-[#e6e5ea] px-[14px]"><svg class="h-[15px] w-[13px]"><use href="#trash"/></svg>删除</button>
              <div class="relative ml-auto">
                <select aria-label="每页条数" class="h-[30px] w-[133px] appearance-none rounded border border-[#cfcfcf] bg-white pl-[6px] text-black"><option>每页显示 20 条</option></select>
                <svg class="pointer-events-none absolute top-3 right-[5px] h-[6px] w-[9px] text-black"><use href="#caret"/></svg>
              </div>
              <span class="ml-[5px] w-[55px] rounded bg-[#91c562] text-center leading-[30px] text-white">共0项</span>
              <button class="ml-1 w-6 rounded bg-[#91c562] leading-[30px] font-bold text-white">1</button>
              <input aria-label="页码" value="1" class="ml-1 h-[30px] w-[33px] rounded-l border border-r-0 border-[#cfcfcf] bg-white pl-[6px]">
              <span class="w-[71px] rounded-r bg-[#91c562] text-center leading-[30px] text-white">/共 1 页</span>
              <button aria-label="回到顶部" class="ml-1 flex h-[30px] w-7 items-center justify-center rounded bg-[#91c562] text-white"><svg class="h-[10px] w-[14px]" viewBox="0 0 14 10"><path fill="none" stroke="currentColor" stroke-width="3" d="M1 8.500l6-6 6 6"/></svg></button>
              <button class="ml-1 flex h-[30px] w-[79px] items-center justify-center gap-1 rounded bg-[#91c562] text-white"><svg class="h-[14px] w-[14px]"><use href="#gear"/></svg>列配置</button>
            </div>
          </div>
        </div>
      </div>
    </section>
  </main>
  <!-- vertical scroll bar -->
  <div class="flex w-5 shrink-0 flex-col items-center bg-[#f1f1f1] pt-2 pb-1">
    <svg class="h-[6px] w-[9px] shrink-0" viewBox="0 0 10 6"><path fill="#a0a0a0" d="M5 0l5 6H0z"/></svg>
    <div class="mt-[7px] mb-auto h-[71%] w-[15px] bg-[#c1c1c1]"></div>
    <svg class="mb-1 h-[6px] w-[9px] shrink-0 text-[#505050]"><use href="#caret"/></svg>
  </div>
</div>
<!-- horizontal scroll bar -->
<div class="flex h-5 shrink-0 items-center bg-[#f1f1f1]">
  <svg class="ml-[7px] h-[10px] w-[6px]" viewBox="0 0 6 10"><path fill="#a0a0a0" d="M6 0v10L0 5z"/></svg>
  <div class="ml-[7px] h-4 w-[83.8%] bg-[#c1c1c1]"></div>
  <svg class="mr-[6px] ml-auto h-[10px] w-[6px]" viewBox="0 0 6 10"><path fill="#505050" d="M0 0v10l6-5z"/></svg>
  <div class="h-5 w-5 bg-[#dcdcdc]"></div>
</div>

<!-- desktop task bar -->
<footer class="flex h-12 shrink-0 items-stretch bg-linear-to-r from-[#22353c] via-[#20343e] via-50% to-[#1b2440] text-[14px] whitespace-nowrap text-white">
  <button aria-label="开始" class="flex w-[61px] items-center justify-center pr-1"><svg class="h-5 w-5" viewBox="0 0 20 20"><path fill="#fff" d="M0 2.800l8.200-1.100v7.900H0zM9.200 1.500L20 0v9.600H9.200zM0 10.500h8.200v7.900L0 17.200zM9.200 10.500H20V20L9.200 18.500z"/></svg></button>
  <button class="flex w-48 items-center border-b-3 border-[#76abdc] bg-[#4e626c] pl-3">
    <svg class="h-8 w-[32px]" viewBox="0 0 32 32"><circle cx="15" cy="14" r="13" fill="#fff"/><path fill="#e04435" d="M15 1c5 0 9 2.500 11.300 6.500H15c-3 0-5.500 2-6.300 4.500L4 6.500C6.500 3 10.500 1 15 1z"/><path fill="#2ea24d" d="M3.700 7l5.500 9.500c1 2.300 3.300 3.800 5.800 3.800h1.500L13 27C6.500 26 2 20.500 2 14c0-2.500.6-5 1.700-7z"/><path fill="#f9c734" d="M26.500 8c1 2 1.500 4 1.500 6 0 7-5.500 12.700-13 13l5.500-9.500c1.500-3 .8-7-2-9.500z"/><circle cx="15" cy="14" r="5" fill="#3f7de8" stroke="#fff" stroke-width="1.300"/><circle cx="22" cy="23" r="8.500" fill="#d7d7d7"/><circle cx="22" cy="20" r="2.800" fill="#8c8c8c"/><ellipse cx="22" cy="26.500" rx="4.800" ry="3" fill="#8c8c8c"/></svg>
    <span class="ml-[2px]">刊登 | 旺销王 - Go...</span>
  </button>
  <button class="ml-[6px] flex w-[183px] items-center border-b-3 border-[#76abdc] pl-[7px]"><svg class="h-7 w-7"><use href="#recorder"/></svg><span class="ml-[6px]">全能录像</span></button>
  <button class="ml-[9px] flex w-[183px] items-center border-b-3 border-[#76abdc] pl-[7px]"><svg class="h-7 w-7"><use href="#recorder"/></svg><span class="ml-[6px]">视频编辑</span></button>
  <button class="ml-[10px] flex w-[183px] items-center border-b-3 border-[#76abdc] pl-[7px]"><svg class="h-7 w-7" viewBox="0 0 28 28"><rect width="28" height="28" fill="#2b2b2b"/><path fill="#f7a11c" d="M10 2l12 12L4 26z"/></svg><span class="ml-[6px]">旺销王客户端 v15....</span></button>
  <button class="ml-[10px] flex w-[183px] items-center border-b-3 border-[#76abdc] pl-[6px]"><svg class="h-7 w-[30px]" viewBox="0 0 30 28"><circle cx="16.500" cy="14" r="13.500" fill="#e2593b"/><path fill="#f28b70" d="M16.500.5A13.500 13.500 0 0 1 30 14H16.500z"/><rect y="6.500" width="15" height="15" rx="1.500" fill="#c13b1b"/><path fill="none" stroke="#fff" stroke-width="2.200" d="M5.500 18.500V10H8c4 0 4 5.200 0 5.200H5.500"/></svg><span class="ml-[5px]">亚马逊.pptx - Pow...</span></button>
  <div class="ml-auto flex items-center">
    <svg class="h-2 w-[15px]" viewBox="0 0 15 8"><path fill="none" stroke="#fff" stroke-width="1.500" d="M1 7.500l6.500-6.500L14 7.500"/></svg>
    <svg class="ml-3 h-[17px] w-[18px]" viewBox="0 0 18 17"><rect width="18" height="17" fill="#292a33"/><path fill="#f7a11c" d="M7 1l8 7.500L4 16z"/></svg>
    <svg class="ml-3 h-[19px] w-[14px]" viewBox="0 0 14 19"><rect x="3" width="8" height="13" rx="1" fill="#fff"/><path fill="none" stroke="#fff" stroke-width="1.300" d="M.7 9v5.500h12.600V9M7 14.500V18M3.500 18.300h7"/></svg>
    <svg class="ml-[14px] h-3 w-[18px]" viewBox="0 0 18 12"><path fill="none" stroke="#fff" stroke-width="1.300" d="M.7.700h15v10.600H.7z"/><path fill="#fff" d="M2.500 2.500H9v7H2.500zM16 4h2v4h-2z"/></svg>
    <svg class="ml-[14px] h-4 w-4" viewBox="0 0 16 16"><g fill="none" stroke="#ccd1da" stroke-width="1.300"><path d="M1 15C1 7 7 1 15 1M4.500 15C4.500 9 9 4.500 15 4.500M8 15c0-4 3-7 7-7"/></g><path fill="#fff" d="M11 15.500c0-2.500 2-4.500 4.500-4.500v4.500z"/></svg>
    <svg class="ml-[9px] h-[15px] w-[19px]" viewBox="0 0 19 15"><path fill="none" stroke="#fff" stroke-width="1.300" d="M.7 5h3L8 1v13L3.700 10h-3zM10.500 5c1.300 1.500 1.300 3.500 0 5"/><path fill="none" stroke="#aab0bd" stroke-width="1.200" d="M13 3c2.300 2.600 2.300 6.400 0 9M15.500 1c3.500 3.600 3.500 9.400 0 13"/></svg>
    <span class="ml-[9px] text-[18px]">中</span>
    <time class="ml-2 flex w-20 flex-col text-center text-[15px] leading-[22px]"><span>17:46</span><span>2020/10/29</span></time>
    <svg class="ml-5 h-7 w-[30px]" viewBox="0 0 30 28"><path fill="#fff" d="M1 1h19v14H9l-4 4v-4H1z"/><path stroke="#1b2440" stroke-width="1.300" d="M4 5h13M4 8h13M4 11h13"/><circle cx="19.500" cy="18" r="9" fill="#33353f" stroke="#8a8d96" stroke-width="1.300"/><path fill="none" stroke="#fff" stroke-width="2" d="M17 15.500l3-2V23"/></svg>
    <i class="mr-[5px] ml-3 h-12 w-px bg-[#858b99]"></i>
  </div>
</footer>

<svg class="pointer-events-none absolute top-[712px] left-[739px] h-[23px] w-4" viewBox="0 0 16 23"><path fill="#fff" stroke="#222" stroke-width="1.200" d="M1 1v17.500l4-3.700 2.800 7 2.800-1.200-2.900-6.800H14z"/></svg>
</body>
</html>
